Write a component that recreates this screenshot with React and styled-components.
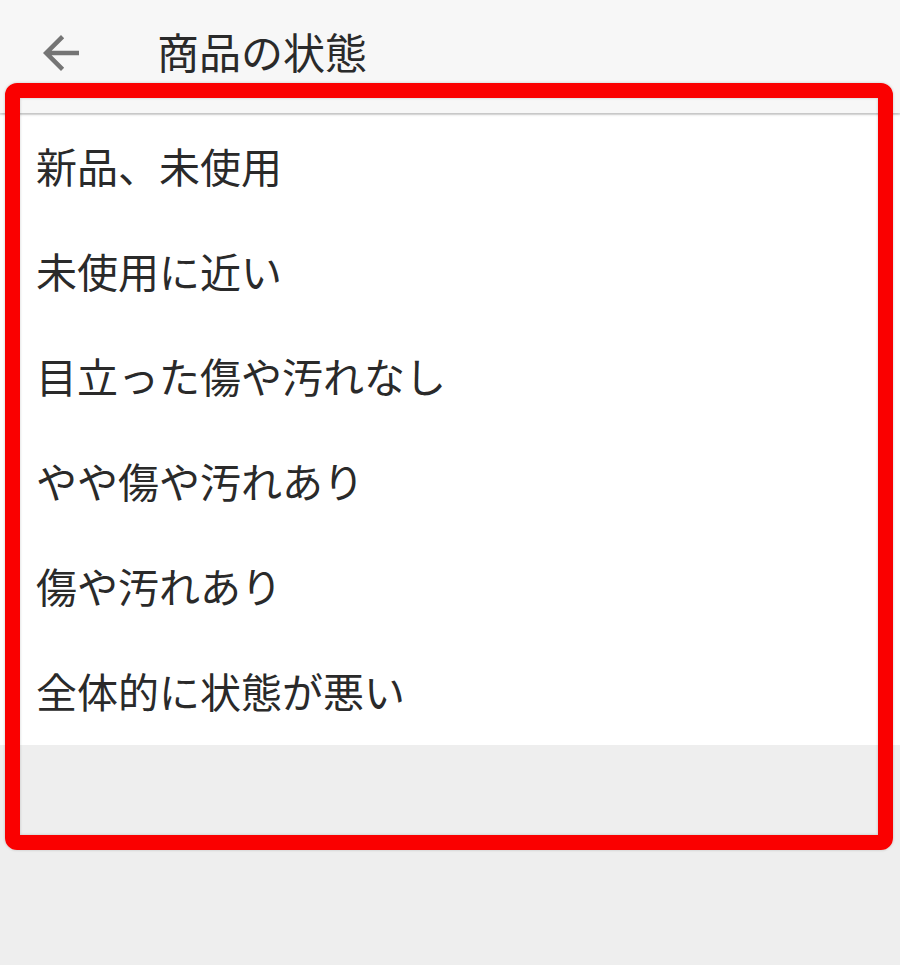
import React from 'react'
import styled, { createGlobalStyle } from 'styled-components'

const GlobalStyle = createGlobalStyle`
  html, body {
    margin: 0;
    padding: 0;
    background: #eeeeee;
  }
  body {
    font-family: "Noto Sans CJK JP", "Noto Sans", sans-serif;
  }
`

const Screen = styled.div`
  position: relative;
  width: 900px;
  height: 965px;
  background: #eeeeee;
  overflow: hidden;
`

const Header = styled.header`
  display: flex;
  align-items: center;
  height: 113px;
  padding: 0 0 0 34px;
  box-sizing: border-box;
  background: #f7f7f7;
  box-shadow: 0 1px 3px rgba(0, 0, 0, 0.25);
  position: relative;
  z-index: 1;
`

const BackButton = styled.button`
  display: flex;
  align-items: center;
  justify-content: center;
  width: 54px;
  height: 54px;
  padding: 0;
  margin: -8px 69px 0 0;
  border: none;
  background: none;
  color: #757575;
`

const Title = styled.h1`
  margin: -12px 0 0 0;
  font-size: 42px;
  font-weight: 400;
  color: #2a2a2a;
`

const List = styled.ul`
  list-style: none;
  margin: 2px 0 0 0;
  padding: 0;
  background: #ffffff;
`

const Item = styled.li`
  display: flex;
  align-items: center;
  height: 105px;
  padding: 0 0 4px 36px;
  box-sizing: border-box;
  font-size: 41px;
  color: #2a2a2a;
  line-height: 1;
`

const Highlight = styled.div`
  position: absolute;
  left: 5px;
  top: 83px;
  width: 888px;
  height: 767px;
  box-sizing: border-box;
  border: 15px solid #fa0000;
  border-radius: 12px;
  box-shadow: 0 0 3px rgba(0, 0, 0, 0.2), inset 0 0 3px rgba(0, 0, 0, 0.2);
  z-index: 2;
  pointer-events: none;
`

const options = [
  '新品、未使用',
  '未使用に近い',
  '目立った傷や汚れなし',
  'やや傷や汚れあり',
  '傷や汚れあり',
  '全体的に状態が悪い',
]

const ArrowBack = () => (
  <svg width="54" height="54" viewBox="0 0 24 24" fill="currentColor">
    <path d="M20 11H7.83l5.59-5.59L12 4l-8 8 8 8 1.41-1.41L7.83 13H20v-2z" />
  </svg>
)

export default function App() {
  return (
    <Screen>
      <GlobalStyle />
      <Header>
        <BackButton aria-label="戻る">
          <ArrowBack />
        </BackButton>
        <Title>商品の状態</Title>
      </Header>
      <List>
        {options.map((o) => (
          <Item key={o}>{o}</Item>
        ))}
      </List>
      <Highlight />
    </Screen>
  )
}
